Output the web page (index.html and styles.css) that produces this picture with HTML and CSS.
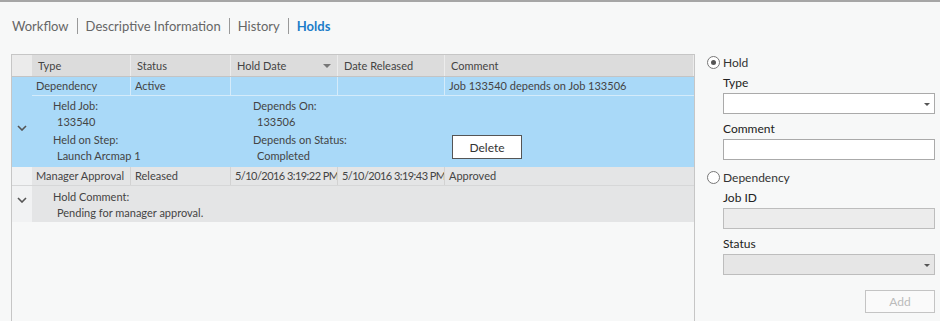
FILE: index.html
```html
<!DOCTYPE html>
<html lang="en">
<head>
    <meta charset="UTF-8">
    <title>Holds</title>
    <link rel="stylesheet" href="styles.css">
</head>
<body>
    <nav class="tabs">
        <span class="tab">Workflow</span>
        <span class="tab">Descriptive Information</span>
        <span class="tab">History</span>
        <span class="tab active">Holds</span>
    </nav>

    <div class="content">
        <div class="holds-grid">
            <div class="line grid-head">
                <div class="gutter"></div>
                <div class="cell">Type</div>
                <div class="cell">Status</div>
                <div class="cell sorted">Hold Date <span class="sort-arrow"></span></div>
                <div class="cell">Date Released</div>
                <div class="cell">Comment</div>
            </div>

            <div class="record selected">
                <div class="line">
                    <div class="gutter"></div>
                    <div class="cell">Dependency</div>
                    <div class="cell">Active</div>
                    <div class="cell"></div>
                    <div class="cell"></div>
                    <div class="cell">Job 133540 depends on Job 133506</div>
                </div>
                <div class="detail">
                    <div class="gutter">
                        <svg class="chevron" width="10" height="6" viewBox="0 0 10 6"><path d="M1 1 L5 5 L9 1" fill="none" stroke="#555" stroke-width="1.6"/></svg>
                    </div>
                    <div class="detail-body">
                        <div class="field">
                            <div class="field-label">Held Job:</div>
                            <div class="field-value">133540</div>
                            <div class="field-label">Held on Step:</div>
                            <div class="field-value">Launch Arcmap 1</div>
                        </div>
                        <div class="field">
                            <div class="field-label">Depends On:</div>
                            <div class="field-value">133506</div>
                            <div class="field-label">Depends on Status:</div>
                            <div class="field-value">Completed</div>
                        </div>
                        <button class="delete-btn">Delete</button>
                    </div>
                </div>
            </div>

            <div class="record">
                <div class="line">
                    <div class="gutter"></div>
                    <div class="cell">Manager Approval</div>
                    <div class="cell">Released</div>
                    <div class="cell date">5/10/2016 3:19:22 PM</div>
                    <div class="cell date">5/10/2016 3:19:43 PM</div>
                    <div class="cell">Approved</div>
                </div>
                <div class="detail">
                    <div class="gutter">
                        <svg class="chevron" width="10" height="6" viewBox="0 0 10 6"><path d="M1 1 L5 5 L9 1" fill="none" stroke="#555" stroke-width="1.6"/></svg>
                    </div>
                    <div class="detail-body comment-body">
                        <div class="field">
                            <div class="field-label">Hold Comment:</div>
                            <div class="field-value">Pending for manager approval.</div>
                        </div>
                    </div>
                </div>
            </div>
        </div>

        <div class="side-panel">
            <label class="radio-row"><span class="radio checked"></span>Hold</label>
            <div class="form-group">
                <div class="form-label">Type</div>
                <div class="select-box"><span class="drop-arrow"></span></div>
                <div class="form-label">Comment</div>
                <div class="text-box"></div>
            </div>

            <label class="radio-row"><span class="radio"></span>Dependency</label>
            <div class="form-group">
                <div class="form-label">Job ID</div>
                <div class="text-box disabled"></div>
                <div class="form-label">Status</div>
                <div class="select-box disabled"><span class="drop-arrow"></span></div>
            </div>

            <div class="actions">
                <button class="add-btn" disabled>Add</button>
            </div>
        </div>
    </div>
</body>
</html>
```

FILE: styles.css
```css
body {
    margin: 0;
    background: #f7f8f8;
    border-top: 2px solid #a6a6a6;
    font-family: 'Lato', 'Noto Sans', sans-serif;
    color: #444;
    height: 319px;
    overflow: hidden;
}
.tabs {
    display: flex;
    align-items: center;
    height: 45px;
    padding-left: 12px;
    box-sizing: border-box;
    padding-top: 2px;
}
.tab {
    font-size: 13px;
    color: #666;
    padding: 0 8px;
    border-left: 1px solid #999;
    line-height: 16px;
}
.tab:first-child {
    border-left: none;
    padding-left: 0;
}
.tab.active {
    color: #1b7cc8;
    font-weight: 700;
}
.content {
    display: flex;
    margin-top: 7px;
    height: 267px;
}
.holds-grid {
    margin-left: 11px;
    width: 682px;
    border: 1px solid #c6c6c6;
    border-bottom: none;
    font-size: 11px;
}
.line {
    display: grid;
    grid-template-columns: 20px 99px 100px 107px 107px 1fr;
    height: 18px;
    align-items: stretch;
}
.cell {
    padding-left: 4px;
    line-height: 17px;
    white-space: nowrap;
    overflow: hidden;
    border-right: 1px solid #d2d2d2;
}
.cell:last-child {
    border-right: none;
}
.cell.date {
    letter-spacing: -0.55px;
}
.grid-head {
    height: 21px;
    background: #dcdcdc;
    border-bottom: 1px solid #c4c4c4;
}
.grid-head .gutter {
    background: #ebebeb;
}
.grid-head .cell {
    line-height: 21px;
    padding-left: 6px;
    border-right: 1px solid #ececec;
}
.sorted {
    position: relative;
}
.sort-arrow {
    position: absolute;
    right: 6px;
    top: 9px;
    border-left: 4px solid transparent;
    border-right: 4px solid transparent;
    border-top: 4px solid #777;
}
.record {
    background: #e4e5e6;
}
.record .line {
    border-bottom: 1px solid #d6d7d8;
}
.record .gutter {
    background: #f1f2f3;
}
.record.selected,
.record.selected .gutter {
    background: #a9d9f8;
}
.record.selected .cell {
    border-right-color: #d4ebfa;
}
.record.selected .line {
    border-bottom-color: #d4ebfa;
}
.record.selected .line .gutter {
    border-bottom: 1px solid #a9d9f8;
    margin-bottom: -1px;
}
.detail {
    display: flex;
}
.detail .gutter {
    width: 20px;
    flex: none;
    display: flex;
    align-items: center;
    justify-content: center;
    padding-bottom: 8px;
    box-sizing: border-box;
}
.detail-body {
    flex: 1;
    display: flex;
    padding: 2px 0 3px 21px;
}
.comment-body {
    padding: 3px 0 1px 21px;
}
.field {
    width: 200px;
}
.field-label,
.field-value {
    line-height: 16px;
}
.field-value {
    padding-left: 4px;
    margin-bottom: 2px;
}
.field-value:last-child {
    margin-bottom: 0;
}
.delete-btn {
    align-self: flex-end;
    width: 70px;
    height: 24px;
    margin: 0 0 5px -1px;
    background: #fff;
    border: 1px solid #555;
    font-family: inherit;
    font-size: 12px;
    color: #333;
}
.side-panel {
    margin-left: 12px;
    width: 228px;
    font-size: 12px;
    color: #222;
}
.radio-row {
    display: flex;
    align-items: center;
    gap: 3px;
    height: 17px;
    color: #333;
}
.radio {
    width: 11px;
    height: 11px;
    border: 1px solid #777;
    border-radius: 50%;
    background: #fff;
    position: relative;
}
.radio.checked::after {
    content: '';
    position: absolute;
    left: 3px;
    top: 3px;
    width: 5px;
    height: 5px;
    border-radius: 50%;
    background: #555;
}
.form-group {
    padding-left: 16px;
    padding-bottom: 9px;
}
.form-label {
    line-height: 17px;
    margin: 3px 0 2px;
}
.form-group > div + .form-label {
    margin-top: 6px;
}
.select-box,
.text-box {
    height: 19px;
    border: 1px solid #aaa;
    background: #fff;
    position: relative;
}
.disabled {
    background: #ececec;
    border-color: #bdbdbd;
}
.select-box.disabled {
    background: #e6e6e6;
}
.drop-arrow {
    position: absolute;
    right: 4px;
    top: 9px;
    border-left: 3px solid transparent;
    border-right: 3px solid transparent;
    border-top: 3px solid #555;
}
.actions {
    display: flex;
    justify-content: flex-end;
    padding-top: 6px;
}
.add-btn {
    width: 70px;
    height: 23px;
    background: #fafafa;
    border: 1px solid #c4c4c4;
    color: #bbb;
    font-family: inherit;
    font-size: 12px;
}
```
